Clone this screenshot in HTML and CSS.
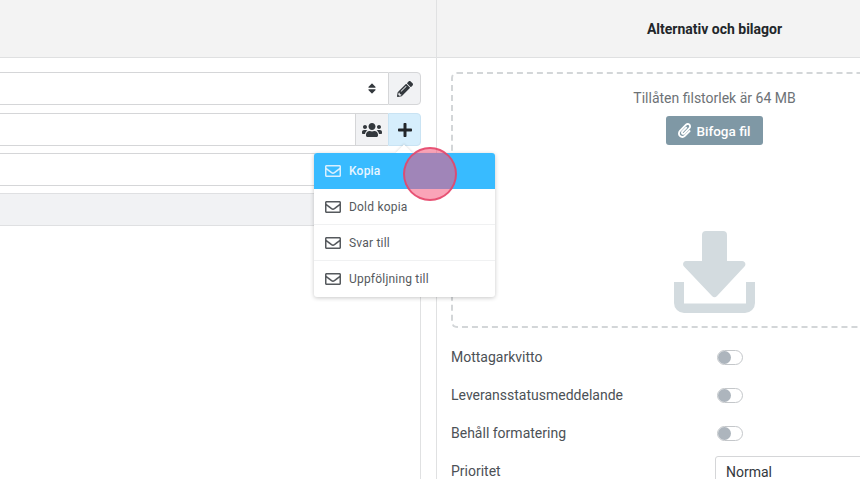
FILE: index.html
```html
<!DOCTYPE html>
<html lang="sv">
<head>
<meta charset="utf-8">
<title>Alternativ och bilagor</title>
<link rel="stylesheet" href="styles.css">
</head>
<body>
<div class="page">
  <section class="left">
    <header class="head"></header>
    <div class="fields">
      <div class="row row-first">
        <div class="field">
          <svg class="sort" viewBox="0 0 320 512"><path d="M41 288h238c21.4 0 32.1 25.9 17 41L177 448c-9.4 9.4-24.6 9.4-33.9 0L24 329c-15.1-15.1-4.4-41 17-41zm255-105L177 64c-9.4-9.4-24.6-9.4-33.9 0L24 183c-15.1 15.1-4.4 41 17 41h238c21.4 0 32.1-25.9 17-41z"/></svg>
        </div>
        <button class="addon addon-end">
          <svg class="i-pencil" viewBox="0 0 512 512"><path d="M497.9 142.1l-46.1 46.1c-4.7 4.7-12.3 4.7-17 0l-111-111c-4.7-4.7-4.7-12.3 0-17l46.1-46.1c18.7-18.7 49.1-18.7 67.9 0l60.1 60.1c18.8 18.7 18.8 49.1 0 67.9zM284.2 99.8L21.6 362.4.4 483.9c-2.9 16.4 11.4 30.6 27.8 27.8l121.5-21.3 262.6-262.6c4.7-4.7 4.7-12.3 0-17l-111-111c-4.8-4.7-12.4-4.7-17.1 0zM124.1 339.9c-5.5-5.5-5.5-14.3 0-19.8l154-154c5.5-5.5 14.3-5.5 19.8 0s5.5 14.3 0 19.8l-154 154c-5.5 5.5-14.3 5.5-19.8 0zM88 424h48v36.3l-64.5 11.3-31.1-31.1L51.7 376H88v48z"/></svg>
        </button>
      </div>
      <div class="row">
        <div class="field"></div>
        <button class="addon">
          <svg class="i-users" viewBox="0 0 640 512"><path d="M96 224c35.3 0 64-28.7 64-64s-28.7-64-64-64-64 28.7-64 64 28.7 64 64 64zm448 0c35.3 0 64-28.7 64-64s-28.7-64-64-64-64 28.7-64 64 28.7 64 64 64zm32 32h-64c-17.6 0-33.5 7.1-45.1 18.6 40.3 22.1 68.9 62 75.1 109.4h66c17.7 0 32-14.3 32-32v-32c0-35.3-28.7-64-64-64zm-256 0c61.9 0 112-50.1 112-112S381.9 32 320 32 208 82.1 208 144s50.1 112 112 112zm76.8 32h-8.3c-20.8 10-43.9 16-68.5 16s-47.6-6-68.5-16h-8.3C179.6 288 128 339.6 128 403.2V432c0 26.5 21.5 48 48 48h288c26.5 0 48-21.5 48-48v-28.8c0-63.6-51.6-115.2-115.2-115.2zm-223.7-13.4C161.5 263.1 145.6 256 128 256H64c-35.3 0-64 28.7-64 64v32c0 17.7 14.3 32 32 32h65.9c6.3-47.4 34.9-87.3 75.2-109.4z"/></svg>
        </button>
        <button class="addon addon-end addon-active">
          <svg class="i-plus" viewBox="0 0 448 512"><path d="M416 208H272V64c0-17.67-14.33-32-32-32h-32c-17.67 0-32 14.33-32 32v144H32c-17.67 0-32 14.33-32 32v32c0 17.67 14.33 32 32 32h144v144c0 17.67 14.33 32 32 32h32c17.67 0 32-14.33 32-32V304h144c17.67 0 32-14.33 32-32v-32c0-17.67-14.33-32-32-32z"/></svg>
        </button>
      </div>
      <div class="row"><div class="field field-end"></div></div>
      <div class="toolbar"></div>
      <div class="editor"></div>
    </div>
  </section>

  <section class="right">
    <header class="head head-title">Alternativ och bilagor</header>
    <div class="body">
      <div class="drop">
        <p class="limit">Tillåten filstorlek är 64 MB</p>
        <button class="attach">
          <svg class="i-clip" viewBox="0 0 448 512"><path d="M43.246 466.142c-58.43-60.289-57.341-157.511 1.386-217.581L254.392 34c44.316-45.332 116.351-45.336 160.671 0 43.89 44.894 43.943 117.329 0 162.276L232.214 383.128c-29.855 30.537-78.633 30.111-107.982-.998-28.275-29.97-27.368-77.473 1.452-106.953l143.743-146.835c6.182-6.314 16.312-6.422 22.626-.241l22.861 22.379c6.315 6.182 6.422 16.312.241 22.626L171.427 319.927c-4.932 5.045-5.236 13.428-.648 18.292 4.372 4.634 11.245 4.711 15.688.165l182.849-186.851c19.613-20.062 19.613-52.725-.011-72.798-19.189-19.627-49.957-19.637-69.154 0L90.39 293.295c-34.763 35.56-35.299 93.12-1.191 128.313 34.01 35.093 88.985 35.137 123.058.286l172.06-175.999c6.177-6.319 16.307-6.433 22.626-.256l22.877 22.364c6.319 6.177 6.434 16.307.256 22.626l-172.06 175.998c-59.576 60.938-155.943 60.216-214.77-.485z"/></svg>
          Bifoga fil
        </button>
        <svg class="i-drop" viewBox="0 0 81 82"><path d="M32 0h17a4 4 0 0 1 4 4v26h15c3 0 4.500 3.500 2.500 5.500L43 65a3.500 3.500 0 0 1-5 0L10 35.500C8 33.500 9.500 30 12 30h16V4a4 4 0 0 1 4-4z"/><path d="M0 51h10v21.500h62V51h9v21a10 10 0 0 1-10 10H10A10 10 0 0 1 0 72z"/></svg>
      </div>
      <div class="options">
        <span class="opt-label">Mottagarkvitto</span><span class="toggle"></span>
        <span class="opt-label">Leveransstatusmeddelande</span><span class="toggle"></span>
        <span class="opt-label">Behåll formatering</span><span class="toggle"></span>
        <span class="opt-label">Prioritet</span><div class="select">Normal</div>
      </div>
    </div>
  </section>

  <div class="menu">
    <a class="item item-on"><svg class="i-mail" viewBox="0 0 512 512"><use href="#mail"/></svg>Kopia</a>
    <a class="item"><svg class="i-mail" viewBox="0 0 512 512"><use href="#mail"/></svg>Dold kopia</a>
    <a class="item"><svg class="i-mail" viewBox="0 0 512 512"><use href="#mail"/></svg>Svar till</a>
    <a class="item item-last"><svg class="i-mail" viewBox="0 0 512 512"><use href="#mail"/></svg>Uppföljning till</a>
  </div>
  <div class="touch"></div>

  <svg class="defs" width="0" height="0"><defs><path id="mail" d="M464 64H48C21.49 64 0 85.49 0 112v288c0 26.51 21.49 48 48 48h416c26.51 0 48-21.49 48-48V112c0-26.51-21.49-48-48-48zm0 48v40.805c-22.422 18.259-58.168 46.651-134.587 106.49-16.841 13.247-50.201 45.072-73.413 44.701-23.208.375-56.579-31.459-73.413-44.701C106.18 199.465 70.425 171.067 48 152.805V112h416zM48 400V214.398c22.914 18.251 55.409 43.862 104.938 82.646 21.857 17.205 60.134 55.186 103.062 54.955 42.717.231 80.509-37.199 103.053-54.947 49.528-38.783 82.032-64.401 104.947-82.653V400H48z"/></defs></svg>
</div>
</body>
</html>
```
FILE: styles.css
```css
* { box-sizing: border-box; }
html, body { margin: 0; height: 100%; overflow: hidden; background: #fff; }
body { font-family: Roboto, "Liberation Sans", sans-serif; color: #555a5f; }
p { margin: 0; }

.page { display: flex; width: 860px; height: 479px; overflow: hidden; position: relative; }

.left { width: 437px; flex: none; border-right: 1px solid #e0e1e2; display: flex; flex-direction: column; }
.right { width: 555px; flex: none; display: flex; flex-direction: column; }

.head { height: 58px; flex: none; background: #f3f3f3; border-bottom: 1px solid #dfe0e1; }
.head-title { display: flex; align-items: center; justify-content: center; font-size: 14px; font-weight: 700; color: #22262a; }

.fields { flex: 1; padding: 14px 15px 0 0; display: flex; flex-direction: column; }
.row { display: flex; height: 33px; margin-bottom: 7px; flex: none; }
.row-first { margin-bottom: 8px; }
.field { flex: 1; border: 1px solid #d5d6d8; border-left: 0; border-right: 0; background: #fff; display: flex; align-items: center; justify-content: flex-end; padding-right: 12px; }
.field-end { border-right: 1px solid #d5d6d8; border-radius: 0 3px 3px 0; }
.sort { width: 8px; height: 13px; fill: #33383d; }

.addon { width: 33px; padding: 0; flex: none; display: flex; align-items: center; justify-content: center; background: #f1f2f4; border: 1px solid #d5d6d8; border-right: 0; }
.addon-end { border-right: 1px solid #d5d6d8; border-radius: 0 4px 4px 0; }
.addon-active { background: #d6eefc; border-color: #c9e3f3; }
.i-pencil { width: 16px; height: 16px; fill: #33383d; }
.i-users { width: 20px; height: 16px; fill: #33383d; }
.i-plus { width: 14px; height: 16px; fill: #22262a; }

.toolbar { height: 33px; flex: none; background: #f1f2f4; border: 1px solid #dfe0e2; border-left: 0; }
.editor { flex: 1; border-right: 1px solid #e0e1e2; }

.body { flex: 1; padding: 14px 14px 0; }
.drop { height: 256px; border: 2px dashed #d3d6d8; border-radius: 6px; display: flex; flex-direction: column; align-items: center; padding-top: 14px; }
.limit { font-size: 14px; line-height: 20px; color: #6d7276; }
.attach { margin-top: 8px; width: 97px; height: 29px; padding: 0; border: 0; border-radius: 3px; background: #7f98a5; color: #fff; font: 500 13.5px Roboto, sans-serif; display: flex; align-items: center; justify-content: center; gap: 5px; }
.i-clip { width: 13px; height: 15px; fill: #fff; }
.i-drop { width: 81px; height: 82px; margin-top: 86px; fill: #d3dbdf; }

.options { display: grid; grid-template-columns: 264px 1fr; grid-auto-rows: 38px; margin-top: 10px; font-size: 14px; align-items: center; }
.opt-label { color: #4c5156; }
.toggle { width: 26px; height: 15px; margin-left: 2px; border: 1px solid #c4c7ca; border-radius: 8px; background: #fff; position: relative; }
.toggle::before { content: ""; display: block; width: 13px; height: 13px; border-radius: 50%; background: #adb5bd; }
.select { height: 34px; margin-top: 4px; border: 1px solid #d5d6d8; border-radius: 3px; padding: 6px 10px; font-size: 14px; line-height: 18px; color: #33383d; }

.menu { position: absolute; left: 314px; top: 153px; width: 181px; background: #fff; border-radius: 3px; box-shadow: 0 1px 4px rgba(0, 0, 0, .22); }
.menu::before { content: ""; position: absolute; left: 84px; top: -6px; width: 12px; height: 12px; background: #fff; transform: rotate(45deg); box-shadow: -1px -1px 2px rgba(0, 0, 0, .08); }
.item { position: relative; display: flex; align-items: center; gap: 8px; height: 36px; padding-left: 11px; font-size: 12px; font-weight: 400; color: #55595d; border-bottom: 1px solid #f0f1f2; letter-spacing: .2px; }
.item-on { background: #38bbff; color: #e9f6ff; font-weight: 500; border-bottom: 0; border-radius: 3px 3px 0 0; }
.item-last { border-bottom: 0; }
.i-mail { width: 16px; height: 16px; fill: #55595d; }
.item-on .i-mail { fill: #d8f0ff; }

.touch { position: absolute; left: 403px; top: 147px; width: 54px; height: 54px; border-radius: 50%; background: rgba(246, 90, 125, .55); border: 2px solid rgba(228, 68, 105, .85); }
.defs { position: absolute; }
```
